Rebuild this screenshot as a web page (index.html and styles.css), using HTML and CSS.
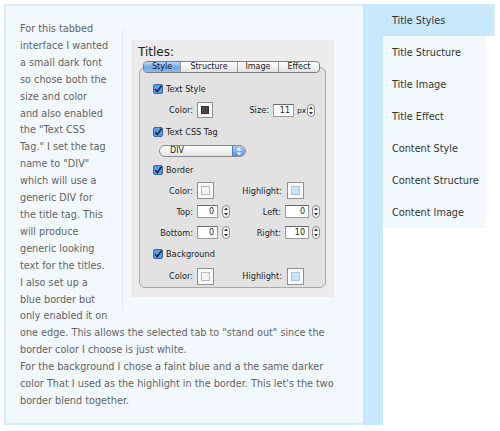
FILE: index.html
```html
<!DOCTYPE html>
<html>
<head>
<meta charset="utf-8">
<link rel="stylesheet" href="styles.css">
</head>
<body>
<div class="page">
  <div class="panel">
    <div class="figure">
      <div class="shot">
        <div class="shot-title">Titles:</div>
        <div class="group">
          <div class="seg">
            <span class="on s1">Style</span><span class="s2">Structure</span><span class="s3">Image</span><span class="s4">Effect</span>
          </div>
          <div class="row r21 check"><svg class="cb" viewBox="0 0 10 10" width="10" height="10"><rect x=".5" y=".5" width="9" height="9" rx="1.5" fill="#5b9be6" stroke="#3a68a6"/><path d="M2.2 5.2 L4.3 7.5 L8.6 1.6" fill="none" stroke="#15223f" stroke-width="1.6"/></svg><span>Text Style</span></div>
          <div class="row r22">
            <span class="lab">Color:</span><span class="well small dark"><i></i></span>
            <span class="lab size">Size:</span><span class="field">11</span><span class="unit">px</span>
            <svg class="step" viewBox="0 0 8 13" width="8" height="13"><rect x=".5" y=".5" width="7" height="12" rx="3.5" fill="#f6f6f6" stroke="#8a8a8a"/><path d="M4 2.4 L6 5 H2Z M4 10.6 L6 8 H2Z" fill="#333"/></svg>
          </div>
          <div class="row r21 check"><svg class="cb" viewBox="0 0 10 10" width="10" height="10"><rect x=".5" y=".5" width="9" height="9" rx="1.5" fill="#5b9be6" stroke="#3a68a6"/><path d="M2.2 5.2 L4.3 7.5 L8.6 1.6" fill="none" stroke="#15223f" stroke-width="1.6"/></svg><span>Text CSS Tag</span></div>
          <div class="row r18">
            <div class="select"><span>DIV</span><i><svg viewBox="0 0 6 9" width="6" height="9"><path d="M3 0.5 L5.5 3.5 H0.5Z M3 8.5 L5.5 5.5 H0.5Z" fill="#fff"/></svg></i></div>
          </div>
          <div class="row r20 check"><svg class="cb" viewBox="0 0 10 10" width="10" height="10"><rect x=".5" y=".5" width="9" height="9" rx="1.5" fill="#5b9be6" stroke="#3a68a6"/><path d="M2.2 5.2 L4.3 7.5 L8.6 1.6" fill="none" stroke="#15223f" stroke-width="1.6"/></svg><span>Border</span></div>
          <div class="row r21">
            <span class="lab">Color:</span><span class="well"><i></i></span>
            <span class="lab hl-lab">Highlight:</span><span class="well hl"><i></i></span>
          </div>
          <div class="row r21">
            <span class="lab">Top:</span><span class="field">0</span>
            <svg class="step s-a" viewBox="0 0 8 13" width="8" height="13"><rect x=".5" y=".5" width="7" height="12" rx="3.5" fill="#f6f6f6" stroke="#8a8a8a"/><path d="M4 2.4 L6 5 H2Z M4 10.6 L6 8 H2Z" fill="#333"/></svg>
            <span class="lab side">Left:</span><span class="field wide">0</span>
            <svg class="step s-b" viewBox="0 0 8 13" width="8" height="13"><rect x=".5" y=".5" width="7" height="12" rx="3.5" fill="#f6f6f6" stroke="#8a8a8a"/><path d="M4 2.4 L6 5 H2Z M4 10.6 L6 8 H2Z" fill="#333"/></svg>
          </div>
          <div class="row r21">
            <span class="lab">Bottom:</span><span class="field">0</span>
            <svg class="step s-a" viewBox="0 0 8 13" width="8" height="13"><rect x=".5" y=".5" width="7" height="12" rx="3.5" fill="#f6f6f6" stroke="#8a8a8a"/><path d="M4 2.4 L6 5 H2Z M4 10.6 L6 8 H2Z" fill="#333"/></svg>
            <span class="lab side">Right:</span><span class="field wide">10</span>
            <svg class="step s-b" viewBox="0 0 8 13" width="8" height="13"><rect x=".5" y=".5" width="7" height="12" rx="3.5" fill="#f6f6f6" stroke="#8a8a8a"/><path d="M4 2.4 L6 5 H2Z M4 10.6 L6 8 H2Z" fill="#333"/></svg>
          </div>
          <div class="row r22 check"><svg class="cb" viewBox="0 0 10 10" width="10" height="10"><rect x=".5" y=".5" width="9" height="9" rx="1.5" fill="#5b9be6" stroke="#3a68a6"/><path d="M2.2 5.2 L4.3 7.5 L8.6 1.6" fill="none" stroke="#15223f" stroke-width="1.6"/></svg><span>Background</span></div>
          <div class="row r22">
            <span class="lab">Color:</span><span class="well"><i></i></span>
            <span class="lab hl-lab">Highlight:</span><span class="well hl"><i></i></span>
          </div>
        </div>
      </div>
    </div>
    For this tabbed<br>interface I wanted<br>a small dark font<br>so chose both the<br>size and color<br>and also enabled<br>the "Text CSS<br>Tag." I set the tag<br>name to "DIV"<br>which will use a<br>generic DIV for<br>the title tag. This<br>will produce<br>generic looking<br>text for the titles.<br>I also set up a<br>blue border but<br>only enabled it on<br>one edge. This allows the selected tab to "stand out" since the<br>border color I choose is just white.<br>For the background I chose a faint blue and a the same darker<br>color That I used as the highlight in the border. This let's the two<br>border blend together.
  </div>
  <div class="strip"></div>
  <ul class="tabs">
    <li class="active">Title Styles</li>
    <li>Title Structure</li>
    <li>Title Image</li>
    <li>Title Effect</li>
    <li>Content Style</li>
    <li>Content Structure</li>
    <li>Content Image</li>
  </ul>
</div>
</body>
</html>
```
FILE: styles.css
```css
body {
  margin: 0;
  background: #fff;
  font-family: "DejaVu Sans", Verdana, sans-serif;
}
.page {
  display: flex;
  margin: 4px 0 0 4px;
}
.panel {
  width: 359px;
  box-sizing: border-box;
  border: 2px solid #d5edfa;
  border-right: 0;
  background: #f2f9fd;
  padding: 15px 16px 13px 14px;
  font-size: 9.7px;
  line-height: 16.9px;
  color: #626262;
}
.strip {
  width: 20px;
  flex: none;
  background: #c8e8fb;
}
.tabs {
  list-style: none;
  margin: 0;
  padding: 0;
  align-self: flex-start;
  font-size: 9.7px;
  color: #333;
}
.tabs li {
  width: 103px;
  height: 32px;
  line-height: 30px;
  padding: 2px 0 0 9px;
  box-sizing: border-box;
  background: #f2f9fd;
}
.tabs li.active {
  width: 112px;
  background: #c8e8fb;
  border-right: 1px solid #dff1fc;
}

/* floated screenshot */
.figure {
  float: right;
  margin: 9px 13px 0 6px;
  padding: 10px 0 13px 8px;
  border-left: 1px dotted #dfe5e8;
}
.shot {
  width: 203px;
  height: 257px;
  box-sizing: border-box;
  background: #ececec;
  padding-top: 4px;
  font-size: 8.2px;
  line-height: normal;
  color: #1e1e1e;
}
.shot-title {
  height: 16px;
  line-height: 16px;
  padding-left: 7px;
  font-size: 12px;
  color: #222;
}
.group {
  margin: 7px 8px 0 8px;
  border: 1px solid #a9a9a9;
  border-radius: 6px;
  background: #e2e2e2;
}
.seg {
  display: flex;
  width: 177px;
  height: 12px;
  box-sizing: border-box;
  margin: -7px 0 5px 3px;
  border: 1px solid #7d7d7d;
  border-radius: 4px;
  overflow: hidden;
  background: linear-gradient(#ffffff, #e2e2e2);
  font-size: 8px;
  line-height: 10px;
  color: #1a1a1a;
}
.seg span {
  text-align: center;
  border-left: 1px solid #9a9a9a;
  box-sizing: border-box;
}
.seg .s1 { width: 36px; border-left: 0; }
.seg .s2 { width: 57px; }
.seg .s3 { width: 41px; }
.seg .s4 { width: 41px; }
.seg .on {
  background: linear-gradient(#bcd9f7, #6ea7ea 55%, #8cbcf0);
}
.row {
  display: flex;
  align-items: center;
}
.r18 { height: 18px; }
.r20 { height: 20px; }
.r21 { height: 21px; }
.r22 { height: 22px; }
.check { padding-left: 13px; }
.cb { flex: none; margin-right: 3px; }
.lab {
  flex: none;
  width: 53px;
  margin-right: 4px;
  text-align: right;
}
.lab.size { width: 56px; }
.lab.hl-lab { width: 68px; margin-right: 5px; }
.lab.side { width: 51px; }
.well {
  flex: none;
  display: flex;
  width: 17px;
  height: 17px;
  box-sizing: border-box;
  border: 1px solid #8e8e8e;
  background: #fbfbfb;
  padding: 3px;
}
.well.small { width: 16px; height: 16px; }
.well i {
  flex: 1;
  border: 1px solid #b9b9b9;
  background: #f6f6f6;
}
.well.dark i { background: #474747; border-color: #333; }
.well.hl i { background: #c9e4f6; border-color: #a9c4d8; }
.field {
  flex: none;
  width: 21px;
  height: 13px;
  box-sizing: border-box;
  border: 1px solid #9a9a9a;
  border-top-color: #6a6a6a;
  background: #fff;
  text-align: right;
  padding-right: 3px;
  font-size: 8px;
  line-height: 11px;
}
.field.wide { width: 24px; }
.unit {
  margin-left: 3px;
  font-size: 7.5px;
}
.step { flex: none; margin-left: 1px; }
.step.s-a { margin-left: 4px; margin-right: 0; }
.step.s-b { margin-left: 3px; }
.select {
  display: flex;
  margin-left: 19px;
  width: 87px;
  height: 12px;
  box-sizing: border-box;
  border: 1px solid #8a8a8a;
  border-radius: 6px;
  overflow: hidden;
  background: linear-gradient(#ffffff, #e4e4e4);
  font-size: 8px;
  line-height: 10px;
}
.select span { flex: 1; padding-left: 10px; }
.select i {
  display: flex;
  align-items: center;
  justify-content: center;
  width: 12px;
  border-left: 1px solid #5a7fb5;
  background: linear-gradient(#a9cdf4, #4f92e4);
}
```
